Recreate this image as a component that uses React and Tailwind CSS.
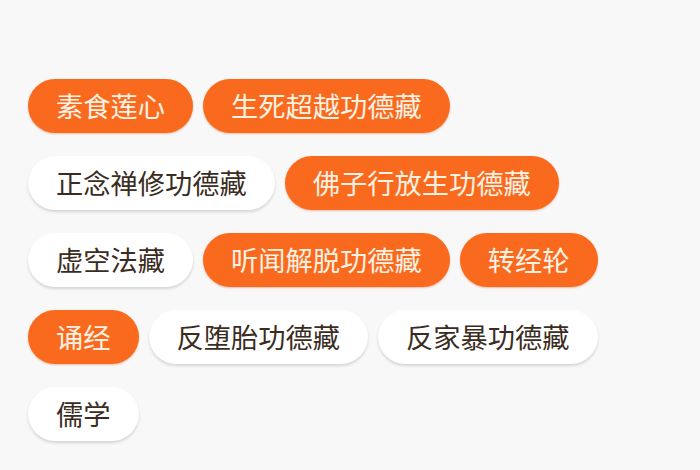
import React from "react";

const tags = [
  [
    { text: "素食莲心", on: true },
    { text: "生死超越功德藏", on: true },
  ],
  [
    { text: "正念禅修功德藏", on: false },
    { text: "佛子行放生功德藏", on: true },
  ],
  [
    { text: "虚空法藏", on: false },
    { text: "听闻解脱功德藏", on: true },
    { text: "转经轮", on: true },
  ],
  [
    { text: "诵经", on: true },
    { text: "反堕胎功德藏", on: false },
    { text: "反家暴功德藏", on: false },
  ],
  [{ text: "儒学", on: false }],
];

const Tag = ({ text, on }) => (
  <span
    className={
      "h-[54px] px-[28px] rounded-full flex items-center text-[27.25px] leading-none " +
      (on
        ? "bg-[#f96a1f] text-[#fdf1e2] shadow-[0_1px_2px_rgba(200,80,20,0.35)]"
        : "bg-white text-[#3b2c22] shadow-[0_2px_3px_rgba(0,0,0,0.14)]")
    }
  >
    {text}
  </span>
);

export default function App() {
  return (
    <div
      className="w-[700px] h-[470px] bg-[#f8f8f8] pt-[79px] pl-[28px]"
      style={{ fontFamily: '"Noto Sans CJK SC", "Noto Sans", sans-serif' }}
    >
      <div className="flex flex-col gap-[23px]">
        {tags.map((row, i) => (
          <div key={i} className="flex gap-[10px]">
            {row.map((t) => (
              <Tag key={t.text} {...t} />
            ))}
          </div>
        ))}
      </div>
    </div>
  );
}
